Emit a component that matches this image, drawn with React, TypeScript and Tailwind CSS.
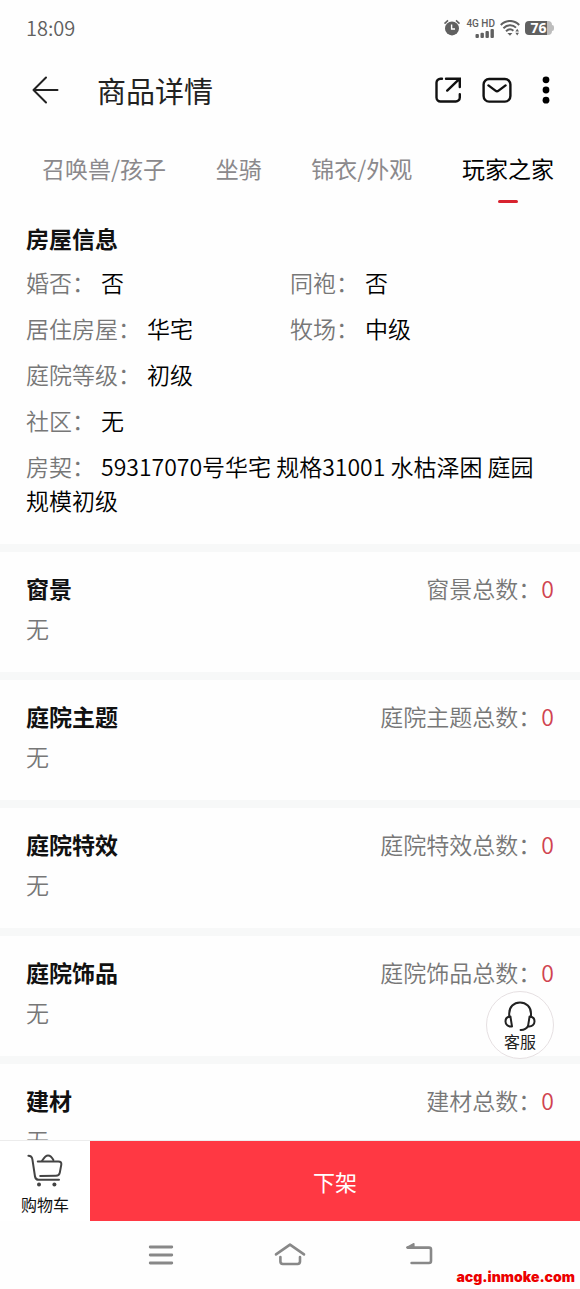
import React from "react";

const tabs = ["召唤兽/孩子", "坐骑", "锦衣/外观", "玩家之家"];
const activeTab = "玩家之家";

const houseInfo: [string, string][][] = [
  [["婚否", "否"], ["同袍", "否"]],
  [["居住房屋", "华宅"], ["牧场", "中级"]],
  [["庭院等级", "初级"]],
  [["社区", "无"]],
  [["房契", "59317070号华宅 规格31001 水枯泽困 庭园规模初级"]],
];

const collections = ["窗景", "庭院主题", "庭院特效", "庭院饰品", "建材"];

function StatusBar() {
  return (
    <div className="flex h-14 shrink-0 items-center justify-between px-[26px] text-[#606060]">
      <span className="text-[20px] font-[350] leading-6">18:09</span>
      <div className="flex items-center gap-[5px]">
        <svg width="18" height="18" viewBox="0 0 18 18" fill="none" aria-hidden="true">
          <circle cx="9" cy="9.4" r="7" fill="#606060" />
          <path d="M1.5 4.6L5 1.4M16.5 4.6L13 1.4" stroke="#606060" strokeWidth="1.6" />
          <path d="M8.6 5.6V10H12" stroke="#fff" strokeWidth="1.4" />
        </svg>
        <div className="flex flex-col items-end">
          <span className="font-['Roboto',sans-serif] text-[10px] font-medium leading-[10px]">4G HD</span>
          <svg width="20" height="9" viewBox="0 0 20 9" fill="#606060" aria-hidden="true">
            <rect x="0.5" y="5" width="3.4" height="4" rx="1" />
            <rect x="5.5" y="3.8" width="3.4" height="5.2" rx="1" />
            <rect x="10.5" y="2" width="3.4" height="7" rx="1" />
            <rect x="15.5" y="0" width="3.4" height="9" rx="1" />
          </svg>
        </div>
        <svg width="20" height="16" viewBox="0 0 20 16" fill="none" stroke="#606060" strokeWidth="2" aria-hidden="true">
          <path d="M0.8 5C6 -0.4 14 -0.4 19.2 5" />
          <path d="M3.4 8.2C7.3 4.4 12.7 4.4 16 7.6" />
          <path d="M6 11.2C8.4 9 11.4 9 13.4 10.8" />
          <path d="M7.4 13L10 15.8L12.4 13Z" fill="#606060" stroke="none" />
          <path d="M15.4 11.4L17.2 8.8L19 11.4ZM15.4 12.8L17.2 15.4L19 12.8Z" fill="#606060" stroke="none" />
        </svg>
        <div className="flex items-center">
          <div className="flex h-[14px] w-[27px] items-center justify-center rounded-[4px] bg-linear-to-r from-[#606060] from-80% to-[#bdbdbd] to-80% font-['Open_Sans',sans-serif] text-[14px] font-bold leading-[14px] text-white">
            76
          </div>
          <div className="h-[6px] w-[2px] rounded-r-sm bg-[#bdbdbd]" />
        </div>
      </div>
    </div>
  );
}

function Header() {
  return (
    <header className="flex h-[68px] shrink-0 items-center pl-8 pr-[30px]">
      <button type="button" aria-label="返回">
        <svg width="28" height="28" viewBox="0 0 28 28" fill="none" stroke="#222" strokeWidth="2" strokeLinecap="round" strokeLinejoin="round">
          <path d="M14 1.5L1.5 14L14 26.5M1.5 14H25.5" />
        </svg>
      </button>
      <h1 className="ml-[37px] flex-1 text-[29px] leading-10 text-[#222]">商品详情</h1>
      <div className="flex items-center gap-5">
        <button type="button" aria-label="分享">
          <svg width="28" height="28" viewBox="0 0 28 28" fill="none" stroke="#111" strokeWidth="2.4" strokeLinecap="round">
            <path d="M8 2.8H6.5A4 4 0 0 0 2.5 6.8V21.5A4 4 0 0 0 6.5 25.5H21.5A4 4 0 0 0 25.8 21.5V18.2" />
            <path d="M12 2.8H25.8V11M13.2 14.6L25.2 3.2" />
          </svg>
        </button>
        <button type="button" aria-label="消息">
          <svg width="30" height="28" viewBox="0 0 30 28" fill="none" stroke="#111" strokeWidth="2.4" strokeLinecap="round" strokeLinejoin="round">
            <rect x="1.6" y="3" width="26.8" height="22.6" rx="5.5" />
            <path d="M6.4 9.4L13.4 14.6Q15 15.8 16.6 14.6L23.6 9.4" />
          </svg>
        </button>
        <button type="button" aria-label="更多" className="ml-[10px]">
          <svg width="8" height="28" viewBox="0 0 8 28" fill="#000">
            <circle cx="4" cy="3.8" r="3.4" />
            <circle cx="4" cy="14" r="3.4" />
            <circle cx="4" cy="24.2" r="3.4" />
          </svg>
        </button>
      </div>
    </header>
  );
}

function Tabs() {
  return (
    <nav className="flex shrink-0 justify-between pb-[18px] pl-[42px] pr-[26px] pt-[27px] text-[23px] leading-[34px]">
      {tabs.map((tab) => (
        <button
          key={tab}
          type="button"
          className={
            tab === activeTab
              ? "flex flex-col items-center gap-[15px] text-black"
              : "flex flex-col items-center gap-[15px] text-[#8b898c]"
          }
        >
          {tab}
          {tab === activeTab && <span className="h-[3px] w-5 rounded-full bg-[#d8232f]" />}
        </button>
      ))}
    </nav>
  );
}

function HouseInfo() {
  return (
    <section className="px-[26px] pb-[27px]">
      <h2 className="font-bold text-[#111]">房屋信息</h2>
      <dl className="mt-[10px] flex flex-col gap-3">
        {houseInfo.map((row) => (
          <div key={row[0][0]} className={row.length > 1 ? "grid grid-cols-2" : "block"}>
            {row.map(([label, value]) => (
              <div key={label}>
                <dt className="mr-[6px] inline font-[350] text-[#777]">{label}：</dt>
                <dd className="inline font-[350] text-black">{value}</dd>
              </div>
            ))}
          </div>
        ))}
      </dl>
    </section>
  );
}

function Collection({ name }: { name: string }) {
  return (
    <section className="border-t-8 border-[#f7f8f8] px-[26px] pb-[27px] pt-[19px]">
      <div className="flex justify-between">
        <h2 className="font-bold text-[#111]">{name}</h2>
        <p className="font-[350] text-[#777]">
          {name}总数：<span className="text-[#d0434f]">0</span>
        </p>
      </div>
      <p className="mt-[6px] font-[350] text-[#777]">无</p>
    </section>
  );
}

function SupportButton() {
  return (
    <button
      type="button"
      className="absolute bottom-[162px] right-[26px] flex size-[68px] flex-col items-center rounded-full border border-[#e6e0e2] bg-white pt-[9px] text-[16px] leading-5 text-[#222]"
    >
      <svg className="shrink-0" width="32" height="30" viewBox="0 0 32 30" fill="none" stroke="#222" strokeWidth="2" strokeLinecap="round" strokeLinejoin="round">
        <path d="M5.2 16V12.5C5.2 6 9.8 1.5 16 1.5S27 6 27 12.5V16" />
        <path d="M6.4 15.4L8 25.4C4 26 1.5 23.5 1.5 20.4C1.5 17.6 3.4 15.6 6.4 15.4Z" />
        <path d="M25.6 15.4L24 25.4C28 26 30.5 23.5 30.5 20.4C30.5 17.6 28.6 15.6 25.6 15.4Z" />
        <path d="M24 25C22.6 27.6 19.8 29 16.6 28.9" />
      </svg>
      客服
    </button>
  );
}

function ActionBar() {
  return (
    <footer className="relative shrink-0 border-t border-[#ececec]">
      <SupportButton />
      <div className="flex h-20">
        <button type="button" className="flex w-[90px] flex-col items-center bg-white pt-3 text-[16px] leading-6 text-[#111]">
          <svg className="mb-[5px] shrink-0" width="36" height="34" viewBox="0 0 36 34" fill="none" stroke="#444" strokeWidth="2" strokeLinecap="round" strokeLinejoin="round">
            <path d="M1.4 2.8C4.2 2.8 5 4 5.4 6.4L8 23.5C8.4 26 9.2 26.8 11.6 26.8H32" />
            <path d="M10.8 8.4H31.4C33.6 8.4 34.6 9.6 34.3 11.6L32.8 19.6C32.4 21.8 31.2 22.8 29 22.8L13.2 23" />
            <path d="M15 8C16.4 5.8 18.2 2.4 21 2.4C23.8 2.4 25.2 4.6 26.4 7" />
            <circle cx="12" cy="31.6" r="2" fill="#444" stroke="none" />
            <circle cx="27.4" cy="31.6" r="2" fill="#444" stroke="none" />
          </svg>
          购物车
        </button>
        <button type="button" className="flex-1 bg-[#ff3843] text-[22px] text-white">
          下架
        </button>
      </div>
    </footer>
  );
}

function SystemNav() {
  return (
    <nav className="relative h-[68px] shrink-0">
      <div className="mx-auto grid h-full w-2/3 grid-cols-3 place-items-center">
        <button type="button" aria-label="最近任务">
          <svg width="32" height="24" viewBox="0 0 32 24" stroke="#888" strokeWidth="2.8" strokeLinecap="round">
            <path d="M5.2 4H26.8M5.2 12H26.8M5.2 20H26.8" />
          </svg>
        </button>
        <button type="button" aria-label="主屏幕">
          <svg width="32" height="24" viewBox="0 0 32 24" fill="none" stroke="#888" strokeWidth="2.6" strokeLinecap="round" strokeLinejoin="round">
            <path d="M2 11.4L16 1.6L30 11.4" />
            <path d="M6.4 14V18.6A2.4 2.4 0 0 0 8.8 21H23.6A2.4 2.4 0 0 0 26 18.6V14" />
          </svg>
        </button>
        <button type="button" aria-label="后退">
          <svg width="32" height="24" viewBox="0 0 32 24" fill="none" stroke="#888" strokeWidth="2.6" strokeLinecap="round" strokeLinejoin="round">
            <path d="M4.6 4.6H26A2 2 0 0 1 28 6.6V18A2 2 0 0 1 26 20H8.6" />
            <path d="M4 4.4L10.8 0.8V4.4Z" fill="#888" strokeWidth="1.6" />
          </svg>
        </button>
      </div>
      <span className="absolute bottom-1 right-[5px] font-['Inter',sans-serif] text-[14px] font-black leading-4 text-[#ec0000]">
        acg.inmoke.com
      </span>
    </nav>
  );
}

export default function App() {
  return (
    <div className="flex h-screen flex-col bg-[#fefefe] font-['Noto_Sans_CJK_SC',sans-serif]">
      <StatusBar />
      <Header />
      <Tabs />
      <main className="min-h-0 flex-1 overflow-y-auto text-[23px] leading-[34px] [scrollbar-width:none]">
        <HouseInfo />
        {collections.map((name) => (
          <Collection key={name} name={name} />
        ))}
      </main>
      <ActionBar />
      <SystemNav />
    </div>
  );
}
